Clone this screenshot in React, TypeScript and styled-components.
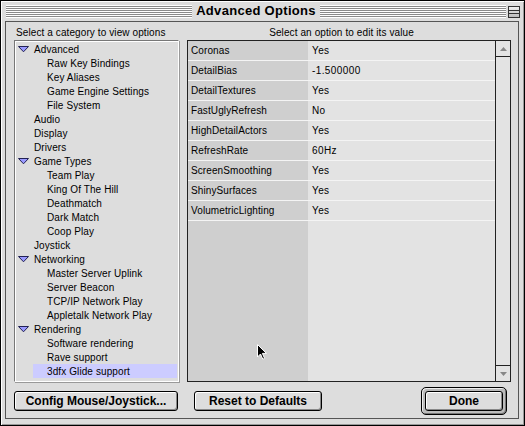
import React from 'react'
import styled, { createGlobalStyle } from 'styled-components'

const GlobalStyle = createGlobalStyle`
  html, body {
    margin: 0;
    padding: 0;
    background: #dddddd;
  }
  * {
    box-sizing: border-box;
  }
`

const uiFont = `"Liberation Sans", Arial, sans-serif`

interface TreeItem {
  label: string
  level: 0 | 1
  open?: boolean
  selected?: boolean
}

const tree: TreeItem[] = [
  { label: 'Advanced', level: 0, open: true },
  { label: 'Raw Key Bindings', level: 1 },
  { label: 'Key Aliases', level: 1 },
  { label: 'Game Engine Settings', level: 1 },
  { label: 'File System', level: 1 },
  { label: 'Audio', level: 0 },
  { label: 'Display', level: 0 },
  { label: 'Drivers', level: 0 },
  { label: 'Game Types', level: 0, open: true },
  { label: 'Team Play', level: 1 },
  { label: 'King Of The Hill', level: 1 },
  { label: 'Deathmatch', level: 1 },
  { label: 'Dark Match', level: 1 },
  { label: 'Coop Play', level: 1 },
  { label: 'Joystick', level: 0 },
  { label: 'Networking', level: 0, open: true },
  { label: 'Master Server Uplink', level: 1 },
  { label: 'Server Beacon', level: 1 },
  { label: 'TCP/IP Network Play', level: 1 },
  { label: 'Appletalk Network Play', level: 1 },
  { label: 'Rendering', level: 0, open: true },
  { label: 'Software rendering', level: 1 },
  { label: 'Rave support', level: 1 },
  { label: '3dfx Glide support', level: 1, selected: true },
]

const options: [string, string][] = [
  ['Coronas', 'Yes'],
  ['DetailBias', '-1.500000'],
  ['DetailTextures', 'Yes'],
  ['FastUglyRefresh', 'No'],
  ['HighDetailActors', 'Yes'],
  ['RefreshRate', '60Hz'],
  ['ScreenSmoothing', 'Yes'],
  ['ShinySurfaces', 'Yes'],
  ['VolumetricLighting', 'Yes'],
]

const Window = styled.div`
  position: relative;
  width: 525px;
  height: 426px;
  border: 1px solid #000;
  background: #dddddd;
  box-shadow: inset 1px 1px 0 #ffffff, inset -1px -1px 0 #999999;
  display: flex;
  flex-direction: column;
  font-family: ${uiFont};
  color: #000;
`

const TitleBar = styled.div`
  height: 20px;
  display: flex;
  align-items: center;
  padding: 0 4px 0 5px;
`

const Stripes = styled.div`
  flex: 1;
  height: 13px;
  margin-top: 1px;
  background: repeating-linear-gradient(to bottom, #ffffff 0 1px, #8a8a8a 1px 2px);
  border-bottom: 1px solid #ffffff;
`

const Title = styled.div`
  padding: 0 4px;
  font-size: 13px;
  font-weight: bold;
  letter-spacing: 0.3px;
  line-height: 20px;
`

const CollapseBox = styled.div`
  width: 12px;
  height: 12px;
  margin-left: 2px;
  margin-top: 1px;
  border: 1px solid #333;
  background: linear-gradient(to bottom, #eeeeee, #bbbbbb);
  position: relative;

  &::before,
  &::after {
    content: '';
    position: absolute;
    left: 0;
    right: 0;
    height: 1px;
    background: #333;
  }
  &::before {
    top: 3px;
  }
  &::after {
    top: 6px;
  }
`

const Panel = styled.div`
  flex: 1;
  margin: 0 5px 6px 4px;
  border: 1px solid #555555;
  background: #dddddd;
  padding: 0 7px 0 8px;
  display: flex;
  flex-direction: column;
`

const LabelRow = styled.div`
  display: grid;
  grid-template-columns: 165px 324px;
  column-gap: 8px;
  height: 18px;
  padding-top: 3px;
  font-size: 10px;
  line-height: 15px;
`

const Caption = styled.div<{ align: 'left' | 'center' }>`
  text-align: ${(p) => p.align};
  padding-left: ${(p) => (p.align === 'left' ? '2px' : '0')};
  padding-right: ${(p) => (p.align === 'center' ? '15px' : '0')};
  letter-spacing: 0.1px;
  white-space: nowrap;
`

const BoxRow = styled.div`
  display: grid;
  grid-template-columns: 165px 324px;
  column-gap: 8px;
  height: 342px;
`

const TreeBox = styled.div`
  border: 1px solid #777777;
  border-right-color: #ffffff;
  border-bottom-color: #ffffff;
  box-shadow: inset 1px 1px 0 #ffffff, 1px 1px 0 #999999;
  background: #dddddd;
  padding-top: 1px;
  overflow: hidden;
`

const TreeRow = styled.div`
  display: flex;
  height: 14px;
  font-size: 10px;
  line-height: 16px;
`

const ToggleSlot = styled.div`
  width: 18px;
  flex: none;
  display: flex;
  align-items: center;
  padding-left: 3px;
`

const TreeLabel = styled.div<{ indent: boolean; selected?: boolean }>`
  flex: 1;
  height: 14px;
  padding-left: ${(p) => (p.indent ? '14px' : '1px')};
  background: ${(p) => (p.selected ? '#ccccff' : 'transparent')};
  margin-right: 1px;
  letter-spacing: 0.1px;
  white-space: nowrap;
`

const TableBox = styled.div`
  border: 1px solid #222222;
  display: flex;
  background: #e3e3e3;
`

const TableBody = styled.div`
  flex: 1;
  background: linear-gradient(to right, #cfcfcf 0 120px, #e3e3e3 120px);
`

const OptionRow = styled.div`
  display: grid;
  grid-template-columns: 120px 1fr;
  height: 20px;
  border-bottom: 1px solid #f4f4f4;
  font-size: 10px;
  line-height: 20px;
  overflow: hidden;
`

const OptionName = styled.div`
  padding-left: 3px;
  letter-spacing: 0.1px;
  white-space: nowrap;
`

const OptionValue = styled.div`
  padding-left: 4px;
  letter-spacing: 0.4px;
`

const ScrollBar = styled.div`
  width: 15px;
  border-left: 1px solid #222222;
  display: flex;
  flex-direction: column;
  background: #e3e3e3;
`

const ScrollTrack = styled.div`
  flex: 1;
`

const ScrollArrow = styled.div<{ dir: 'up' | 'down' }>`
  height: 16px;
  display: flex;
  align-items: center;
  justify-content: center;
  background: #e3e3e3;
  ${(p) => (p.dir === 'up' ? 'border-bottom: 1px solid #222;' : 'border-top: 1px solid #222;')}
`

const ButtonRow = styled.div`
  display: flex;
  align-items: center;
  height: 27px;
  margin-top: 5px;
  padding-right: 4px;
`

const Button = styled.button<{ width: number }>`
  width: ${(p) => p.width}px;
  height: 20px;
  padding: 0;
  border: 1px solid #000;
  border-radius: 3px;
  background: #dddddd;
  box-shadow: inset 1px 1px 0 #ffffff, inset -1px -1px 0 #888888;
  font-family: ${uiFont};
  font-size: 12px;
  font-weight: bold;
  color: #000;
  white-space: nowrap;
  cursor: default;

  & + & {
    margin-left: 16px;
  }
`

const DefaultRing = styled.div`
  margin-left: auto;
  padding: 3px;
  border: 1px solid #000;
  border-radius: 5px;
  background: #bbbbbb;
  box-shadow: inset 1px 1px 0 #eeeeee, inset -1px -1px 0 #777777;
  display: flex;
`

const Pointer = styled.svg`
  position: absolute;
  left: 255px;
  top: 342px;
`

function Disclosure() {
  return (
    <svg width="11" height="7" viewBox="0 0 11 7">
      <polygon points="0.5,0.5 10.5,0.5 5.5,5.8" fill="#9a9aff" stroke="#222255" strokeWidth="1" />
    </svg>
  )
}

function Arrow({ dir }: { dir: 'up' | 'down' }) {
  return (
    <svg width="7" height="4" viewBox="0 0 7 4">
      <polygon points={dir === 'up' ? '0,4 7,4 3.5,0' : '0,0 7,0 3.5,4'} fill="#888888" />
    </svg>
  )
}

export default function App() {
  return (
    <>
      <GlobalStyle />
      <Window>
        <TitleBar>
          <Stripes />
          <Title>Advanced Options</Title>
          <Stripes />
          <CollapseBox />
        </TitleBar>
        <Panel>
          <LabelRow>
            <Caption align="left">Select a category to view options</Caption>
            <Caption align="center">Select an option to edit its value</Caption>
          </LabelRow>
          <BoxRow>
            <TreeBox>
              {tree.map((item) => (
                <TreeRow key={item.label}>
                  <ToggleSlot>{item.open && <Disclosure />}</ToggleSlot>
                  <TreeLabel indent={item.level === 1} selected={item.selected}>
                    {item.label}
                  </TreeLabel>
                </TreeRow>
              ))}
            </TreeBox>
            <TableBox>
              <TableBody>
                {options.map(([name, value]) => (
                  <OptionRow key={name}>
                    <OptionName>{name}</OptionName>
                    <OptionValue>{value}</OptionValue>
                  </OptionRow>
                ))}
              </TableBody>
              <ScrollBar>
                <ScrollArrow dir="up">
                  <Arrow dir="up" />
                </ScrollArrow>
                <ScrollTrack />
                <ScrollArrow dir="down">
                  <Arrow dir="down" />
                </ScrollArrow>
              </ScrollBar>
            </TableBox>
          </BoxRow>
          <ButtonRow>
            <Button width={164}>Config Mouse/Joystick...</Button>
            <Button width={128}>Reset to Defaults</Button>
            <DefaultRing>
              <Button width={78}>Done</Button>
            </DefaultRing>
          </ButtonRow>
        </Panel>
        <Pointer width="12" height="18" viewBox="0 0 12 18">
          <path d="M1.5 1.5 L1.5 14 L4.5 11 L6.8 16.2 L8.6 15.4 L6.4 10.4 L10.5 10.4 Z" fill="#000" stroke="#fff" strokeWidth="1" />
        </Pointer>
      </Window>
    </>
  )
}
